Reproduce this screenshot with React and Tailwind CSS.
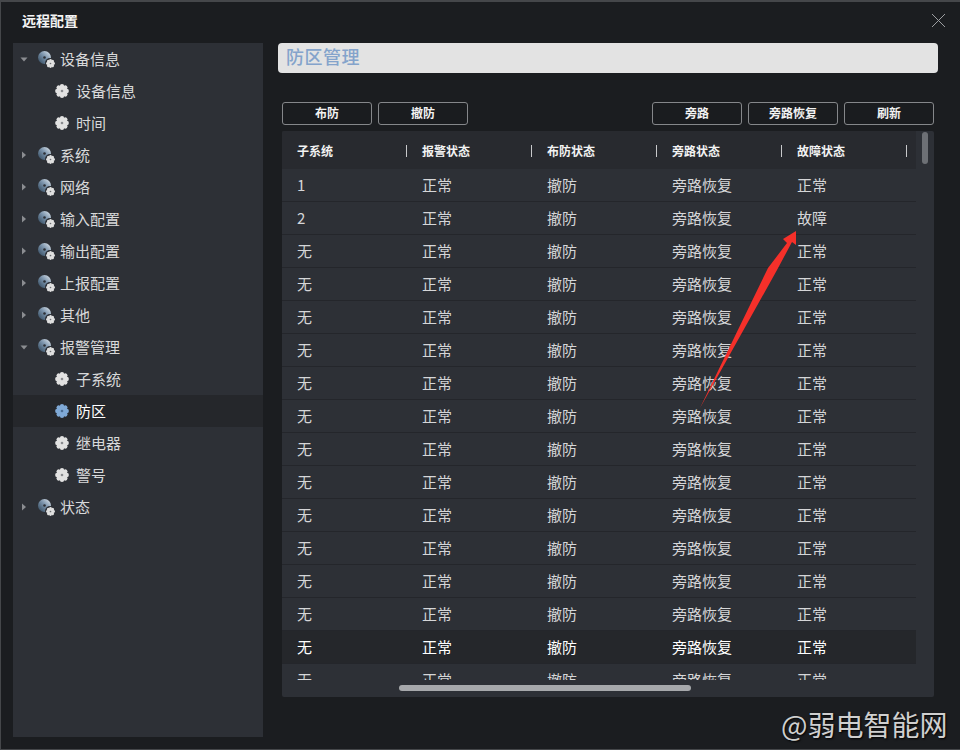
import React from "react";

const FONT = "font-['Noto_Sans_CJK_SC','Noto_Sans',sans-serif]";

const tree = [
  { label: "设备信息", open: true, kids: ["设备信息", "时间"] },
  { label: "系统" },
  { label: "网络" },
  { label: "输入配置" },
  { label: "输出配置" },
  { label: "上报配置" },
  { label: "其他" },
  { label: "报警管理", open: true, kids: ["子系统", "防区", "继电器", "警号"] },
  { label: "状态" },
];

const rows = Array.from({ length: 16 }, (_, i) => ({
  id: i === 0 ? "1" : i === 1 ? "2" : "无",
  fault: i === 1 ? "故障" : "正常",
  hover: i === 14,
}));

const columns = ["子系统", "报警状态", "布防状态", "旁路状态", "故障状态"];

function Gear({ size = 14, color = "#e2e2e2", hub = "#8a8c90" }) {
  const petals = [0, 45, 90, 135, 180, 225, 270, 315];
  return (
    <svg width={size} height={size} viewBox="0 0 14 14" className="shrink-0">
      {petals.map((a) => (
        <circle key={a} cx="7" cy="2.3" r="2.2" fill={color} transform={`rotate(${a} 7 7)`} />
      ))}
      <circle cx="7" cy="7" r="4.4" fill={color} />
      <circle cx="7" cy="7" r="1.3" fill={hub} />
    </svg>
  );
}

function DiscIcon() {
  return (
    <div className="relative w-[16px] h-[16px] shrink-0">
      <svg width="13" height="13" viewBox="0 0 13 13">
        <defs>
          <linearGradient id="disc" x1="1" y1="0" x2="0" y2="1">
            <stop offset="0" stopColor="#e8edf2" />
            <stop offset="0.45" stopColor="#7d95ad" />
            <stop offset="1" stopColor="#2c4358" />
          </linearGradient>
        </defs>
        <circle cx="6.5" cy="6.5" r="6.5" fill="url(#disc)" />
        <circle cx="6.5" cy="6.5" r="1.3" fill="#2d3036" />
      </svg>
      <div className="absolute right-[-1px] bottom-[-1px] bg-[#2d3036] rounded-full p-[0.5px]">
        <Gear size={9} color="#e0e0e0" hub="#6d6f73" />
      </div>
    </div>
  );
}

function Caret({ open }) {
  return (
    <svg width="8" height="8" viewBox="0 0 8 8" className="shrink-0">
      {open ? <path d="M0.5 2.5 L7.5 2.5 L4 6.5 Z" fill="#8b8d91" /> : <path d="M2 0.5 L6 4 L2 7.5 Z" fill="#8b8d91" />}
    </svg>
  );
}

function Sidebar() {
  return (
    <div className="w-[250px] h-[694px] bg-[#2d3036] shrink-0">
      {tree.map((item) => (
        <div key={item.label}>
          <div className="h-[32px] flex items-center pl-[7px]">
            <Caret open={item.open} />
            <div className="ml-[10px]">
              <DiscIcon />
            </div>
            <span className="ml-[6px] text-[15px] text-[#d8d9da]">{item.label}</span>
          </div>
          {item.kids &&
            item.kids.map((kid) => {
              const active = kid === "防区";
              return (
                <div key={kid} className={`h-[32px] flex items-center pl-[42px] ${active ? "bg-[#25272b]" : ""}`}>
                  {active ? <Gear color="#7fa9d6" hub="#4a6d94" /> : <Gear />}
                  <span className={`ml-[7px] text-[15px] ${active ? "text-white" : "text-[#d8d9da]"}`}>{kid}</span>
                </div>
              );
            })}
        </div>
      ))}
    </div>
  );
}

function ToolButton({ children }) {
  return (
    <button className="w-[90px] h-[23px] border border-[#85878a] rounded-[3px] bg-[#1a1c1f] text-[12px] font-bold text-[#f2f2f2] flex items-center justify-center pb-[1px]">
      {children}
    </button>
  );
}

function ZoneTable() {
  return (
    <div className="relative mt-[6px] ml-[4px] w-[652px] h-[566px] bg-[#2d3036] rounded-[2px] overflow-hidden">
      <div className="w-[634px] h-[38px] bg-[#282a2f] flex items-center pt-[1px]">
        {columns.map((c) => (
          <div key={c} className="w-[125px] pl-[15px] flex items-center justify-between shrink-0">
            <span className="text-[12px] font-bold text-[#f2f2f2]">{c}</span>
            <span className="w-px h-[12px] bg-[#c8c9cb]" />
          </div>
        ))}
      </div>
      <div className="w-[634px] h-[511px] overflow-hidden">
        {rows.map((r, i) => (
          <div
            key={i}
            className={`h-[33px] flex items-center border-b border-[#24262b] text-[15px] ${
              r.hover ? "bg-[#25272b] text-white" : "text-[#d5d6d8]"
            }`}
          >
            {[r.id, "正常", "撤防", "旁路恢复", r.fault].map((v, j) => (
              <div key={j} className="w-[125px] pl-[15px] shrink-0">
                {v}
              </div>
            ))}
          </div>
        ))}
      </div>
      {/* scrollbars */}
      <div className="absolute left-[640px] top-[1px] w-[6px] h-[32px] rounded-full bg-[#6d7075]" />
      <div className="absolute left-[117px] top-[554px] w-[292px] h-[6px] rounded-full bg-[#a6a8ab]" />
    </div>
  );
}

export default function App() {
  return (
    <div className={`${FONT} relative w-[960px] h-[750px] bg-[#1b1d20] border-l border-b border-[#45474a] border-t-2 overflow-hidden`}>
      <div className="h-[41px] flex items-center justify-between pl-[21px] pr-[14px] pb-[4px]">
        <span className="text-[14px] font-bold text-[#f4f4f4]">远程配置</span>
        <svg width="15" height="15" viewBox="0 0 15 15">
          <path d="M1 1 L14 14 M14 1 L1 14" stroke="#9c9ea1" strokeWidth="1" fill="none" />
        </svg>
      </div>
      <div className="flex pl-[12px]">
        <Sidebar />
        <div className="ml-[15px] w-[660px]">
          <div className="h-[30px] bg-[#e3e3e3] rounded-[4px] flex items-center pl-[8px] pb-[3px] text-[18px] tracking-[0.5px] font-medium text-[#84a3cb]">
            防区管理
          </div>
          <div className="mt-[29px] ml-[4px] w-[652px] flex justify-between">
            <div className="flex gap-[6px]">
              <ToolButton>布防</ToolButton>
              <ToolButton>撤防</ToolButton>
            </div>
            <div className="flex gap-[6px]">
              <ToolButton>旁路</ToolButton>
              <ToolButton>旁路恢复</ToolButton>
              <ToolButton>刷新</ToolButton>
            </div>
          </div>
          <ZoneTable />
        </div>
      </div>

      {/* red annotation arrow */}
      <svg className="absolute left-[-1px] top-[-2px] pointer-events-none" width="960" height="750" viewBox="0 0 960 750">
        <path d="M700 408 L768 268 L787 243 L783 239 L796 231 L796 245 L792 242 L777 270 Z" fill="#f5302a" />
      </svg>

      {/* watermark */}
      <div className="absolute left-[780px] top-[703px] text-[28px] leading-[38px] text-[#cfcfcf] [text-shadow:1px_1px_2px_#000]">
        @弱电智能网
      </div>
    </div>
  );
}
